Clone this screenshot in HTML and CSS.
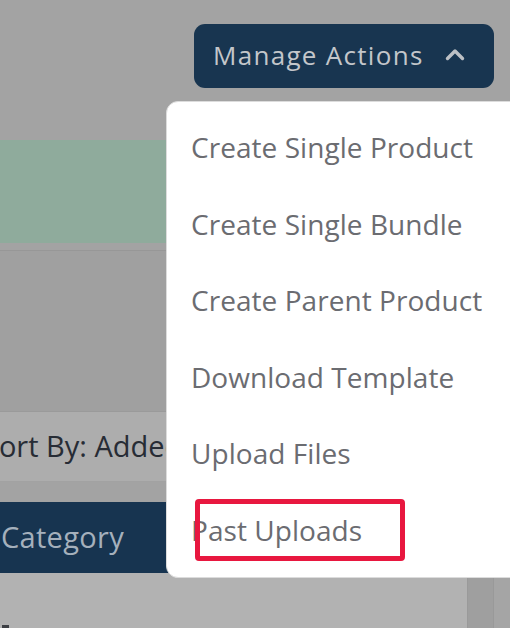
FILE: index.html
```html
<!DOCTYPE html>
<html lang="en">
<head>
<meta charset="utf-8">
<title>Manage Actions</title>
<link rel="stylesheet" href="styles.css">
</head>
<body>
<div class="page">
  <header class="topbar">
    <button class="manage-btn" type="button">
      <span class="manage-label">Manage Actions</span>
      <svg class="chevron" width="20" height="13" viewBox="0 0 20 13" aria-hidden="true">
        <polyline points="2.5,10.5 10,3 17.5,10.5" fill="none" stroke="currentColor" stroke-width="3.4" stroke-linecap="round" stroke-linejoin="round"/>
      </svg>
    </button>
  </header>

  <main class="content">
    <div class="banner"></div>
    <div class="panel"></div>
    <div class="sort-row"><span class="sort-label">Sort By: Added</span></div>
    <div class="table">
      <div class="table-head">
        <span class="col-cat">Category</span>
      </div>
      <div class="table-body">
        <div class="body-main"><span class="check"></span></div>
        <div class="body-side"></div>
      </div>
    </div>
  </main>
  <div class="scroll-strip"></div>

  <ul class="dropdown">
    <li class="dd-item">Create Single Product</li>
    <li class="dd-item">Create Single Bundle</li>
    <li class="dd-item">Create Parent Product</li>
    <li class="dd-item">Download Template</li>
    <li class="dd-item">Upload Files</li>
    <li class="dd-item">Past Uploads</li>
    <li class="highlight" aria-hidden="true"></li>
  </ul>
</div>
</body>
</html>
```

FILE: styles.css
```css
* { box-sizing: border-box; }

html, body {
  margin: 0;
  padding: 0;
}

body {
  width: 510px;
  height: 628px;
  overflow: hidden;
  background: #a3a3a3;
  font-family: "Open Sans", "DejaVu Sans", sans-serif;
}

.page {
  position: relative;
  width: 510px;
  height: 628px;
  overflow: hidden;
}

.topbar {
  display: flex;
  justify-content: flex-end;
  padding: 24px 16px 0 0;
}

.manage-btn {
  display: flex;
  align-items: center;
  width: 300px;
  height: 64px;
  padding: 0 29px 0 19px;
  border: none;
  border-radius: 11px;
  background: #183550;
  color: #c3c6ca;
  font-family: inherit;
  font-size: 26px;
  font-weight: 500;
  letter-spacing: 1.3px;
  cursor: pointer;
}

.manage-label {
  flex: 1;
  text-align: left;
  line-height: 1;
  padding-bottom: 2px;
}

.chevron {
  color: #bcc0c5;
  margin-top: -3px;
}

.content {
  margin: 52px 17px 0 -17px;
}

.banner {
  height: 103px;
  background: #8fab9c;
}

.panel {
  margin-top: 7px;
  height: 162px;
  background: #a0a0a0;
  border-top: 1px solid #979797;
  border-bottom: 1px solid #9a9a9a;
}

.sort-row {
  display: flex;
  align-items: center;
  height: 70px;
  background: #adadad;
  border-bottom: 1px solid #a2a2a2;
  padding-bottom: 2px;
}

.sort-label {
  font-size: 29px;
  font-weight: 500;
  color: #272c35;
  white-space: nowrap;
}

.table {
  margin-top: 20px;
}

.table-head {
  display: flex;
  align-items: center;
  height: 71px;
  background: #173450;
  padding-left: 18px;
}

.col-cat {
  font-size: 29px;
  font-weight: 500;
  color: #a5b0bc;
  letter-spacing: 0.3px;
  padding-bottom: 2px;
}

.table-body {
  display: grid;
  grid-template-columns: 1fr 26px;
  height: 80px;
}

.body-main {
  background: #b2b2b2;
  padding: 52px 0 0 19px;
}

.body-side {
  background: #9f9f9f;
  border-left: 1px solid #9a9a9a;
}

.check {
  display: block;
  width: 7px;
  height: 8px;
  background: #3d3f44;
}

.scroll-strip {
  position: absolute;
  right: 0;
  top: 576px;
  width: 17px;
  height: 52px;
  background: #a5a5a5;
  border-left: 1px solid #999;
}

.dropdown {
  position: absolute;
  left: 166px;
  top: 101px;
  width: 380px;
  margin: 0;
  padding: 7px 0 9px 24px;
  list-style: none;
  background: #ffffff;
  border: 1px solid #dcdcdc;
  border-radius: 12px;
}

.dd-item {
  height: 76.5px;
  line-height: 76.5px;
  font-size: 28px;
  color: #6b6c71;
  white-space: nowrap;
  letter-spacing: 0.05px;
}

.highlight {
  position: absolute;
  left: 28px;
  top: 397px;
  width: 210px;
  height: 62px;
  border: 5px solid #e8173f;
  border-radius: 4px;
}
```
